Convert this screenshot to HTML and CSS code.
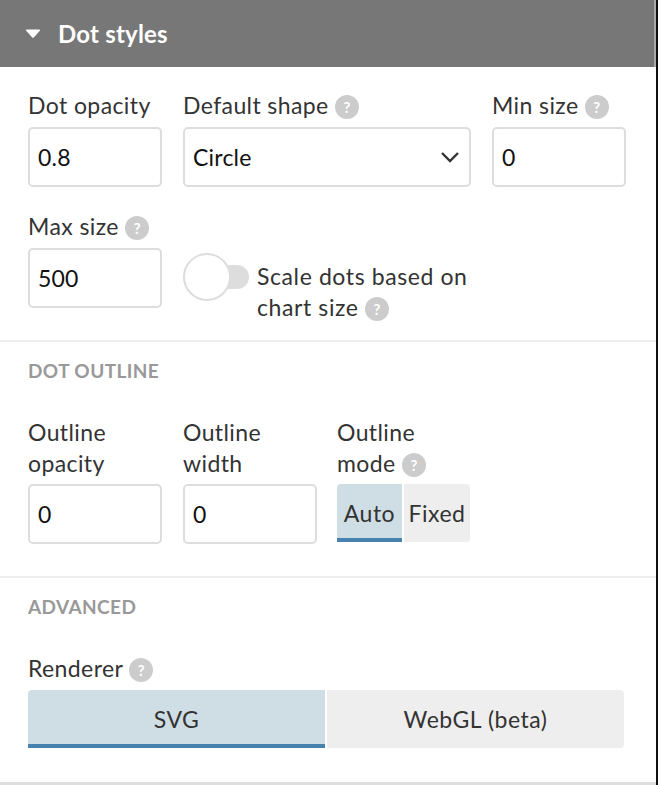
FILE: index.html
```html
<!DOCTYPE html>
<html lang="en">
<head>
    <meta charset="UTF-8">
    <meta name="viewport" content="width=device-width, initial-scale=1.0">
    <title>Dot styles</title>
    <link rel="stylesheet" href="styles.css">
</head>
<body>

<div class="panel">
    <div class="panel-header">
        <svg class="caret" width="16" height="10" viewBox="0 0 16 10"><path d="M1 1.5 Q0.6 0.5 2 0.5 H14 Q15.4 0.5 15 1.5 L9 8.3 Q8 9.3 7 8.3 Z" fill="#fff"/></svg>
        <span>Dot styles</span>
    </div>

    <div class="section section-first">
        <div class="row">
            <div class="field w-134">
                <label>Dot opacity</label>
                <div class="input">0.8</div>
            </div>
            <div class="field w-288">
                <label>Default shape <span class="help">?</span></label>
                <div class="input select">
                    Circle
                    <svg class="chevron" width="20" height="12" viewBox="0 0 20 12"><path d="M2 2 L10 10 L18 2" fill="none" stroke="#333" stroke-width="2.4"/></svg>
                </div>
            </div>
            <div class="field w-134">
                <label>Min size <span class="help">?</span></label>
                <div class="input">0</div>
            </div>
        </div>
        <div class="row row-second">
            <div class="field w-134">
                <label>Max size <span class="help">?</span></label>
                <div class="input">500</div>
            </div>
            <div class="toggle-field">
                <div class="toggle"><div class="knob"></div></div>
                <div class="toggle-label">Scale dots based on<br>chart size <span class="help">?</span></div>
            </div>
        </div>
    </div>

    <div class="section section-outline">
        <h3>DOT OUTLINE</h3>
        <div class="row">
            <div class="field w-134">
                <label>Outline<br>opacity</label>
                <div class="input">0</div>
            </div>
            <div class="field w-134">
                <label>Outline<br>width</label>
                <div class="input">0</div>
            </div>
            <div class="field field-mode">
                <label>Outline<br>mode <span class="help">?</span></label>
                <div class="buttons">
                    <div class="btn active btn-auto">Auto</div>
                    <div class="btn btn-fixed">Fixed</div>
                </div>
            </div>
        </div>
    </div>

    <div class="section section-advanced">
        <h3>ADVANCED</h3>
        <div class="field">
            <label>Renderer <span class="help">?</span></label>
            <div class="buttons buttons-wide">
                <div class="btn active">SVG</div>
                <div class="btn">WebGL (beta)</div>
            </div>
        </div>
    </div>
</div>

</body>
</html>
```

FILE: styles.css
```css
body {
    margin: 0;
    background-color: white;
    font-family: Lato, sans-serif;
    color: #333;
}
.panel {
    width: 656px;
    height: 785px;
    box-sizing: content-box;
    border-right: 2px solid #111;
}
.panel-header {
    height: 67px;
    box-sizing: border-box;
    background-color: #777;
    border-right: 2px solid #aaa;
    color: white;
    display: flex;
    align-items: center;
    padding-left: 25px;
    gap: 17px;
    font-size: 24px;
    font-weight: 700;
    letter-spacing: 0.2px;
}
.section {
    padding-left: 28px;
    box-sizing: border-box;
    border-bottom: 2px solid #eee;
}
.section-first {
    padding-top: 23px;
    height: 275px;
}
.section-outline {
    padding-top: 16px;
    height: 236px;
}
.section-outline h3 {
    margin-bottom: 33px;
}
.section-outline label {
    margin-bottom: 5px;
}
.section-advanced {
    padding-top: 16px;
    height: 207px;
    border-bottom: 3px solid #ddd;
}
.section-advanced h3 {
    margin-bottom: 33px;
}
.row {
    display: flex;
    gap: 21px;
}
.row-second {
    margin-top: 24px;
}
.w-134 {
    width: 134px;
}
.w-288 {
    width: 288px;
}
.field-mode {
    margin-left: -1px;
}
label {
    display: block;
    font-size: 23px;
    line-height: 31px;
    letter-spacing: 0.4px;
    margin-bottom: 6px;
    white-space: nowrap;
}
.help {
    display: inline-block;
    width: 24px;
    height: 24px;
    border-radius: 50%;
    background-color: #ccc;
    color: white;
    font-size: 15px;
    font-weight: 700;
    line-height: 24px;
    letter-spacing: 0;
    text-align: center;
    vertical-align: 1px;
}
.input {
    height: 60px;
    box-sizing: border-box;
    border: 2px solid #ddd;
    border-radius: 5px;
    padding-left: 8px;
    display: flex;
    align-items: center;
    justify-content: space-between;
    font-size: 23px;
    letter-spacing: 0.2px;
    color: #111;
}
.chevron {
    margin-right: 9px;
}
.toggle-field {
    display: flex;
    margin-top: 36px;
    width: 290px;
}
.toggle {
    position: relative;
    flex: none;
    width: 66px;
    height: 24px;
    margin-top: 18px;
    margin-right: 8px;
    background-color: #ddd;
    border-radius: 12px;
}
.knob {
    position: absolute;
    left: 0;
    top: -12px;
    width: 48px;
    height: 48px;
    box-sizing: border-box;
    background-color: white;
    border: 2px solid #ddd;
    border-radius: 50%;
}
.toggle-label {
    font-size: 23px;
    line-height: 31px;
    letter-spacing: 0.6px;
    padding-top: 14px;
    white-space: nowrap;
}
h3 {
    margin: 0 0 32px 0;
    font-size: 19px;
    font-weight: 700;
    line-height: 26px;
    letter-spacing: 0.4px;
    color: #999;
}
.buttons {
    display: flex;
    gap: 2px;
    height: 58px;
}
.btn {
    box-sizing: border-box;
    display: flex;
    align-items: center;
    justify-content: center;
    background-color: #eee;
    font-size: 23px;
    letter-spacing: 0.5px;
    border-radius: 0 4px 4px 0;
}
.btn.active {
    background-color: #cfdde5;
    border-bottom: 4px solid #4682ad;
    padding-top: 4px;
    border-radius: 4px 0 0 0;
}
.btn-auto {
    width: 65px;
}
.btn-fixed {
    width: 66px;
}
.buttons-wide {
    width: 596px;
}
.buttons-wide .btn {
    flex: 1;
}
```
